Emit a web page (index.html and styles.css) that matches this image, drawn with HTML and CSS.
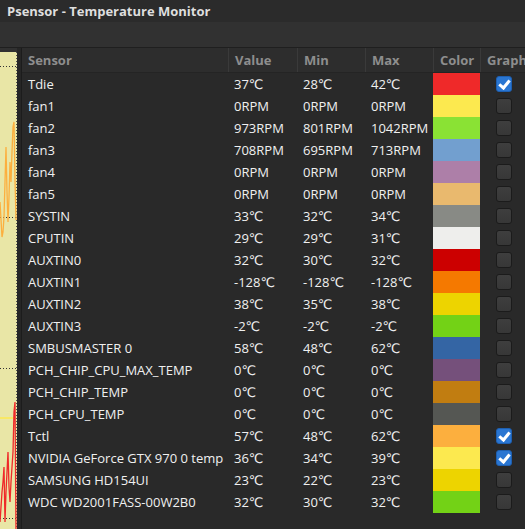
FILE: index.html
```html
<!DOCTYPE html>
<html>
<head>
<meta charset="utf-8">
<link rel="stylesheet" href="styles.css">
</head>
<body>
<div class="window">
  <div class="titlebar">Psensor - Temperature Monitor</div>
  <div class="toolbar"></div>
  <div class="main">
    <div class="graph">
      <svg width="17" height="477" viewBox="0 0 17 477" class="graph-svg">
        <rect x="0" y="0" width="17" height="477" fill="#e9e6a6"/>
        <line x1="16.5" y1="0" x2="16.5" y2="477" stroke="#555" stroke-width="1" stroke-dasharray="1,2"/>
        <line x1="0" y1="14.5" x2="16" y2="14.5" stroke="#333" stroke-width="1" stroke-dasharray="1,2"/>
        <line x1="0" y1="165.5" x2="16" y2="165.5" stroke="#333" stroke-width="1" stroke-dasharray="1,2"/>
        <line x1="0" y1="316.5" x2="16" y2="316.5" stroke="#333" stroke-width="1" stroke-dasharray="1,2"/>
        <line x1="0" y1="466.5" x2="16" y2="466.5" stroke="#333" stroke-width="1" stroke-dasharray="1,2"/>
        <polyline fill="none" stroke="#fcaf3e" stroke-width="1.3" points="0,150 2,185 3,180 4,165 5,130 6,95 7,140 8,170 9,145 10,110 11,130 12,100 13,75 14,70 15,128 16,168"/>
        <line x1="0" y1="366" x2="16" y2="366" stroke="#fce94f" stroke-width="1.5"/>
        <polyline fill="none" stroke="#ef2929" stroke-width="1.3" points="0,470 1,455 2,440 3,430 4,415 5,470 6,440 7,420 8,400 9,435 10,450 11,430 12,415 13,400 14,360 15,350 16,480"/>
      </svg>
    </div>
    <div class="gap"></div>
    <div class="table">
      <div class="row head">
        <div class="c c-name">Sensor</div>
        <div class="c c-val">Value</div>
        <div class="c c-min">Min</div>
        <div class="c c-max">Max</div>
        <div class="c c-col">Color</div>
        <div class="c c-graph">Graph</div>
      </div>
      <div class="row"><div class="c c-name">Tdie</div><div class="c c-val">37℃</div><div class="c c-min">28℃</div><div class="c c-max">42℃</div><div class="c c-col"><span class="sw" style="background:#ef2929"></span></div><div class="c c-graph"><span class="cb on"></span></div></div>
      <div class="row"><div class="c c-name">fan1</div><div class="c c-val">0RPM</div><div class="c c-min">0RPM</div><div class="c c-max">0RPM</div><div class="c c-col"><span class="sw" style="background:#fce94f"></span></div><div class="c c-graph"><span class="cb"></span></div></div>
      <div class="row"><div class="c c-name">fan2</div><div class="c c-val">973RPM</div><div class="c c-min">801RPM</div><div class="c c-max">1042RPM</div><div class="c c-col"><span class="sw" style="background:#8ae234"></span></div><div class="c c-graph"><span class="cb"></span></div></div>
      <div class="row"><div class="c c-name">fan3</div><div class="c c-val">708RPM</div><div class="c c-min">695RPM</div><div class="c c-max">713RPM</div><div class="c c-col"><span class="sw" style="background:#729fcf"></span></div><div class="c c-graph"><span class="cb"></span></div></div>
      <div class="row"><div class="c c-name">fan4</div><div class="c c-val">0RPM</div><div class="c c-min">0RPM</div><div class="c c-max">0RPM</div><div class="c c-col"><span class="sw" style="background:#ad7fa8"></span></div><div class="c c-graph"><span class="cb"></span></div></div>
      <div class="row"><div class="c c-name">fan5</div><div class="c c-val">0RPM</div><div class="c c-min">0RPM</div><div class="c c-max">0RPM</div><div class="c c-col"><span class="sw" style="background:#e9b96e"></span></div><div class="c c-graph"><span class="cb"></span></div></div>
      <div class="row"><div class="c c-name">SYSTIN</div><div class="c c-val">33℃</div><div class="c c-min">32℃</div><div class="c c-max">34℃</div><div class="c c-col"><span class="sw" style="background:#888a85"></span></div><div class="c c-graph"><span class="cb"></span></div></div>
      <div class="row"><div class="c c-name">CPUTIN</div><div class="c c-val">29℃</div><div class="c c-min">29℃</div><div class="c c-max">31℃</div><div class="c c-col"><span class="sw" style="background:#eeeeec"></span></div><div class="c c-graph"><span class="cb"></span></div></div>
      <div class="row"><div class="c c-name">AUXTIN0</div><div class="c c-val">32℃</div><div class="c c-min">30℃</div><div class="c c-max">32℃</div><div class="c c-col"><span class="sw" style="background:#cc0000"></span></div><div class="c c-graph"><span class="cb"></span></div></div>
      <div class="row"><div class="c c-name">AUXTIN1</div><div class="c c-val">-128℃</div><div class="c c-min">-128℃</div><div class="c c-max">-128℃</div><div class="c c-col"><span class="sw" style="background:#f57900"></span></div><div class="c c-graph"><span class="cb"></span></div></div>
      <div class="row"><div class="c c-name">AUXTIN2</div><div class="c c-val">38℃</div><div class="c c-min">35℃</div><div class="c c-max">38℃</div><div class="c c-col"><span class="sw" style="background:#edd400"></span></div><div class="c c-graph"><span class="cb"></span></div></div>
      <div class="row"><div class="c c-name">AUXTIN3</div><div class="c c-val">-2℃</div><div class="c c-min">-2℃</div><div class="c c-max">-2℃</div><div class="c c-col"><span class="sw" style="background:#73d216"></span></div><div class="c c-graph"><span class="cb"></span></div></div>
      <div class="row"><div class="c c-name">SMBUSMASTER 0</div><div class="c c-val">58℃</div><div class="c c-min">48℃</div><div class="c c-max">62℃</div><div class="c c-col"><span class="sw" style="background:#3465a4"></span></div><div class="c c-graph"><span class="cb"></span></div></div>
      <div class="row"><div class="c c-name">PCH_CHIP_CPU_MAX_TEMP</div><div class="c c-val">0℃</div><div class="c c-min">0℃</div><div class="c c-max">0℃</div><div class="c c-col"><span class="sw" style="background:#75507b"></span></div><div class="c c-graph"><span class="cb"></span></div></div>
      <div class="row"><div class="c c-name">PCH_CHIP_TEMP</div><div class="c c-val">0℃</div><div class="c c-min">0℃</div><div class="c c-max">0℃</div><div class="c c-col"><span class="sw" style="background:#c17d11"></span></div><div class="c c-graph"><span class="cb"></span></div></div>
      <div class="row"><div class="c c-name">PCH_CPU_TEMP</div><div class="c c-val">0℃</div><div class="c c-min">0℃</div><div class="c c-max">0℃</div><div class="c c-col"><span class="sw" style="background:#555753"></span></div><div class="c c-graph"><span class="cb"></span></div></div>
      <div class="row"><div class="c c-name">Tctl</div><div class="c c-val">57℃</div><div class="c c-min">48℃</div><div class="c c-max">62℃</div><div class="c c-col"><span class="sw" style="background:#fcaf3e"></span></div><div class="c c-graph"><span class="cb on"></span></div></div>
      <div class="row"><div class="c c-name">NVIDIA GeForce GTX 970 0 temp</div><div class="c c-val">36℃</div><div class="c c-min">34℃</div><div class="c c-max">39℃</div><div class="c c-col"><span class="sw" style="background:#fce94f"></span></div><div class="c c-graph"><span class="cb on"></span></div></div>
      <div class="row"><div class="c c-name">SAMSUNG HD154UI</div><div class="c c-val">23℃</div><div class="c c-min">22℃</div><div class="c c-max">23℃</div><div class="c c-col"><span class="sw" style="background:#edd400"></span></div><div class="c c-graph"><span class="cb"></span></div></div>
      <div class="row"><div class="c c-name">WDC WD2001FASS-00W2B0</div><div class="c c-val">32℃</div><div class="c c-min">30℃</div><div class="c c-max">32℃</div><div class="c c-col"><span class="sw" style="background:#73d216"></span></div><div class="c c-graph"><span class="cb"></span></div></div>
    </div>
  </div>
</div>
</body>
</html>
```

FILE: styles.css
```css
html, body {
  margin: 0;
  padding: 0;
  background: #292929;
  overflow: hidden;
}
.window {
  width: 525px;
  height: 529px;
  display: flex;
  flex-direction: column;
  font-family: "Open Sans", "DejaVu Sans", sans-serif;
  overflow: hidden;
}
.titlebar {
  height: 22px;
  background: #2b2b2b;
  color: #dedede;
  font-weight: bold;
  font-size: 13px;
  line-height: 22px;
  padding-left: 7px;
  box-sizing: border-box;
}
.toolbar {
  height: 25px;
  background: #313131;
  border-bottom: 1px solid #1f1f1f;
}
.main {
  flex: 1;
  display: flex;
  background: #2a2a2a;
  min-height: 0;
}
.graph {
  width: 17px;
  padding-top: 4px;
  background: #313131;
}
.graph-svg {
  display: block;
}
.gap {
  width: 4px;
  background: #262626;
}
.table {
  flex: 1;
  background: #292929;
  border-left: 1px solid #1c1c1c;
  display: flex;
  flex-direction: column;
}
.row {
  display: grid;
  grid-template-columns: 206px 69px 68px 68px 47px 1fr;
  height: 22px;
  color: #f0f0f0;
  font-size: 13px;
  line-height: 22px;
}
.row.head {
  height: 25px;
  line-height: 24px;
  background: #2d2d2d;
  color: #8e8e8e;
  font-weight: bold;
  border-bottom: 1px solid #242424;
  box-sizing: border-box;
}
.row.head .c + .c {
  border-left: 1px solid #3a3a3a;
}
.c {
  padding-left: 6px;
  white-space: nowrap;
  overflow: hidden;
  box-sizing: border-box;
}
.c-col {
  padding: 0;
  display: flex;
}
.row.head .c-col { padding-left: 6px; }
.sw {
  flex: 1;
  display: block;
}
.c-graph {
  display: flex;
  align-items: center;
  padding-left: 16px;
}
.row.head .c-graph { padding-left: 6px; display: block; }
.cb {
  width: 16px;
  height: 16px;
  box-sizing: border-box;
  border: 1px solid #1b1b1b;
  border-radius: 3px;
  background: linear-gradient(#3e3e3e, #373737);
  position: relative;
}
.cb.on {
  background: #2a76d2;
  border-color: #1e5fb0;
}
.cb.on::after {
  content: "";
  position: absolute;
  left: 4px;
  top: 1px;
  width: 4px;
  height: 8px;
  border: solid #fff;
  border-width: 0 3px 3px 0;
  transform: rotate(40deg);
}
```
